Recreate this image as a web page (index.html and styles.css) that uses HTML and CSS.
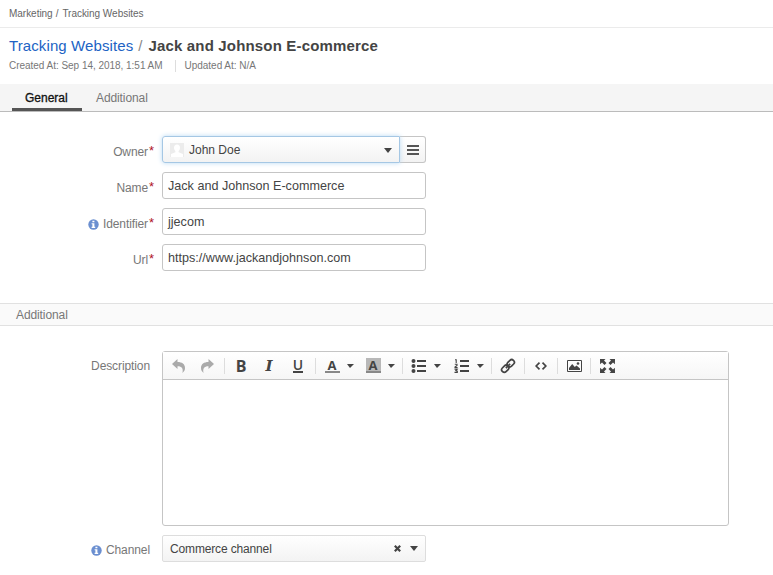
FILE: index.html
```html
<!DOCTYPE html>
<html lang="en">
<head>
<meta charset="utf-8">
<title>Jack and Johnson E-commerce</title>
<link rel="stylesheet" href="styles.css">
</head>
<body>
<nav class="breadcrumb"><span>Marketing</span><span class="crumb-sep">/</span><span>Tracking Websites</span></nav>
<header class="page-head">
  <h1 class="title"><a class="title-link">Tracking Websites</a><span class="title-sep">/</span><b class="title-name">Jack and Johnson E-commerce</b></h1>
  <div class="meta"><span class="created">Created At: Sep 14, 2018, 1:51 AM</span><span class="updated">Updated At: N/A</span></div>
</header>
<div class="tabs"><a class="tab active"><span>General</span></a><a class="tab"><span>Additional</span></a></div>
<main>
  <section class="fields">
    <div class="row">
      <label class="label"><span>Owner</span><em>*</em></label>
      <div class="owner">
        <div class="select focused">
          <svg class="avatar" width="14" height="14" viewBox="0 0 14 14"><path fill="#ececec" d="M0 0h14v14H0z"/><path fill="#fff" d="M7 1.500c2 0 3 1.300 3 3.200 0 1.500-.7 2.800-1.400 3.400v1.200L13 11v3H1v-3l4.400-1.700V8.100C4.700 7.500 4 6.200 4 4.700 4 2.800 5 1.500 7 1.500z"/></svg>
          <span class="owner-name">John Doe</span>
          <i class="arrow"></i>
        </div>
        <button class="list-btn"><svg width="12" height="10" viewBox="0 0 12 10"><path fill="#555" d="M0 0h12v2H0zM0 4h12v2H0zM0 8h12v2H0z"/></svg></button>
      </div>
    </div>
    <div class="row"><label class="label"><span>Name</span><em>*</em></label><div class="input"><span>Jack and Johnson E-commerce</span></div></div>
    <div class="row"><label class="label"><svg class="info" width="11" height="11" viewBox="0 0 11 11"><circle cx="5.500" cy="5.500" r="5.200" fill="#6b8fd0"/><path fill="#fff" d="M4.400 1.700h2v1.500h-2zM3.600 4.200h2.800v3.600h.8v1.100H3.600V7.800h.8V5.300h-.8z"/></svg><span>Identifier</span><em>*</em></label><div class="input"><span>jjecom</span></div></div>
    <div class="row"><label class="label"><span>Url</span><em>*</em></label><div class="input"><span>https://www.jackandjohnson.com</span></div></div>
  </section>
  <h2 class="section-title">Additional</h2>
  <section class="extra">
    <div class="row editor-row">
      <label class="label plain"><span>Description</span></label>
      <div class="editor">
        <div class="toolbar">
          <span class="btn"><svg width="14" height="14" viewBox="0 0 14 14"><path fill="#aaa" d="M0 5 5.500 0v3C10 3 13 5 13 9c0 2-.8 3.500-2.600 5C11.500 10 10 7.300 5.500 7.300V10z"/></svg></span>
          <span class="btn"><svg width="14" height="14" viewBox="0 0 14 14"><path fill="#aaa" d="M14 5 8.500 0v3C4 3 1 5 1 9c0 2 .8 3.500 2.600 5C2.500 10 4 7.300 8.500 7.300V10z"/></svg></span>
          <i class="sep"></i>
          <span class="btn bold">B</span><span class="btn italic">I</span><span class="btn underline"><span>U</span></span>
          <i class="sep"></i>
          <span class="btn"><b class="color">A</b></span><span class="drop"><i class="small-arrow"></i></span>
          <span class="btn"><b class="color back">A</b></span><span class="drop"><i class="small-arrow"></i></span>
          <i class="sep"></i>
          <span class="btn"><svg width="16" height="14" viewBox="0 0 16 14"><path fill="#444" d="M6 1h9v2H6zM6 6h9v2H6zM6 11h9v2H6z"/><g fill="#444"><circle cx="2.500" cy="2" r="2"/><circle cx="2.500" cy="7" r="2"/><circle cx="2.500" cy="12" r="2"/></g></svg></span><span class="drop"><i class="small-arrow"></i></span>
          <span class="btn ordered"><svg width="16" height="14" viewBox="0 0 16 14"><path fill="#444" d="M6 1h9v2H6zM6 6h9v2H6zM6 11h9v2H6z"/><path fill="none" stroke="#444" stroke-width="1.100" d="M1 .8h1.200v3.300M.8 5.300H3v1.200L1 8.100v.5h2.600M.5 10.300h2.600l-1.300 1.300 1.500.6v1.200H.5"/></svg></span><span class="drop"><i class="small-arrow"></i></span>
          <i class="sep"></i>
          <span class="btn"><svg width="16" height="16" viewBox="0 0 16 16"><g fill="none" stroke="#444" stroke-width="1.700" transform="rotate(-45 8 8)"><rect x=".2" y="5.400" width="7.800" height="5.200" rx="2.400"/><rect x="8" y="5.400" width="7.800" height="5.200" rx="2.400"/><path d="M5 8h6"/></g></svg></span>
          <i class="sep"></i>
          <span class="btn"><svg width="12" height="8" viewBox="0 0 12 8"><path fill="none" stroke="#444" stroke-width="1.700" d="M4.500.7 1.200 4l3.300 3.300M7.500.7 10.800 4 7.500 7.300"/></svg></span>
          <i class="sep"></i>
          <span class="btn"><svg width="15" height="12" viewBox="0 0 15 12"><path fill="none" stroke="#444" d="M.5.5h14v11H.5z"/><path fill="#444" d="M2 10V8l3.200-4 2.600 3 1.700-1.500L13 8.500V10z"/><circle cx="11" cy="3.500" r="1.300" fill="#444"/></svg></span>
          <i class="sep"></i>
          <span class="btn"><svg width="15" height="14" viewBox="0 0 15 14"><path fill="#444" d="M0 0h5.500L4 1.500 6.500 4 4.500 6 2 3.500.1 5.300zM15 0H9.500L11 1.500 8.500 4l2 2L13 3.500l1.900 1.800zM0 14h5.500L4 12.500 6.500 10l-2-2L2 10.500.1 8.700zM15 14H9.500l1.500-1.500L8.500 10l2-2 2.500 2.500 1.900-1.800z"/></svg></span>
        </div>
        <div class="canvas"></div>
      </div>
    </div>
    <div class="row">
      <label class="label plain"><svg class="info" width="11" height="11" viewBox="0 0 11 11"><circle cx="5.500" cy="5.500" r="5.200" fill="#6b8fd0"/><path fill="#fff" d="M4.400 1.700h2v1.500h-2zM3.600 4.200h2.800v3.600h.8v1.100H3.600V7.800h.8V5.300h-.8z"/></svg><span>Channel</span></label>
      <div class="select channel"><span class="channel-name">Commerce channel</span><svg class="clear" width="7" height="7" viewBox="0 0 7 7"><path stroke="#444" stroke-width="2.200" d="m.8.8 5.400 5.400M6.200.8.8 6.200"/></svg><i class="arrow"></i></div>
    </div>
  </section>
</main>
</body>
</html>
```
FILE: styles.css
```css
* { box-sizing: border-box; }
body { margin: 0; background: #fff; color: #444; font: 12px/16px "Liberation Sans", Arial, sans-serif; overflow: hidden; }
.breadcrumb { height: 28px; padding-left: 9px; display: flex; align-items: center; border-bottom: 1px solid #ebebeb; font-size: 10px; letter-spacing: -.03px; color: #666; }
.crumb-sep { margin: 0 4px 0 3px; }
.page-head { height: 56px; padding: 8px 0 0 9px; }
.title { margin: 0; display: flex; font-size: 15px; line-height: 20px; font-weight: normal; }
.title-link { color: #2163c4; letter-spacing: .1px; }
.title-sep { color: #888; margin: 0 6px 0 5px; }
.title-name { color: #444; letter-spacing: .17px; }
.meta { display: flex; margin-top: 4px; font-size: 10px; line-height: 12px; letter-spacing: -.03px; color: #777; }
.updated { margin-left: 12px; padding-left: 9px; border-left: 1px solid #ddd; }
.tabs { display: flex; height: 28px; padding-left: 12px; background: #f5f5f5; border-bottom: 1px solid #bbb; }
.tab { padding: 6px 14px 0; color: #777; letter-spacing: -.1px; }
.tab.active { padding: 6px 13px 0; color: #111; width: 70px; border-bottom: 3px solid #555; letter-spacing: 0; -webkit-text-stroke: .3px #111; }
.fields { padding-top: 24px; height: 191px; display: flex; flex-direction: column; gap: 9px; }
.row { display: flex; height: 27px; }
.label { width: 162px; padding: 8px 8px 0 0; display: flex; justify-content: flex-end; letter-spacing: -.1px; color: #777; }
.label.plain { padding: 7px 12px 0 0; }
.label em { color: #b01525; font-style: normal; font-size: 13px; line-height: 14px; margin-left: 1px; width: 5px; }
.info { margin: 3px 4px 0 0; }
.input { width: 264px; border: 1px solid #c5c5c5; border-radius: 3px; padding: 5px; font-size: 12.600px; line-height: 16px; }
.owner { display: flex; width: 264px; }
.select { position: relative; display: flex; align-items: center; border: 1px solid #ddd; border-radius: 2px; background: linear-gradient(#fff, #f3f3f3); }
.select.focused { width: 238px; border-color: #a5c7e4; box-shadow: 0 0 5px #b9d9f2; border-radius: 3px 0 0 3px; padding: 0 7px; z-index: 1; }
.avatar { margin-right: 5px; }
.arrow { border: 4px solid transparent; border-top: 5px solid #444; border-bottom: 0; margin-left: auto; }
.focused .arrow { margin-top: 1px; }
.list-btn { width: 26px; padding: 0; display: flex; align-items: center; justify-content: center; border: 1px solid #c5c5c5; border-left: 0; border-radius: 0 3px 3px 0; background: linear-gradient(#fff, #f3f3f3); }
.section-title { margin: 0; height: 23px; padding: 3px 16px; border: solid #e1e1e1; border-width: 1px 0; background: #fafafa; color: #777; font-size: 12px; line-height: 16px; letter-spacing: -.1px; font-weight: normal; }
.extra { padding-top: 25px; display: flex; flex-direction: column; gap: 9px; }
.editor-row { height: 175px; }
.editor { width: 567px; border: 1px solid #c5c5c5; border-radius: 3px; }
.toolbar { height: 28px; display: flex; align-items: center; padding-left: 2px; border-bottom: 1px solid #c5c5c5; background: linear-gradient(#fff, #f6f6f6); }
.btn { width: 28px; height: 18px; display: flex; align-items: center; justify-content: center; flex: none; }
.sep { width: 1px; height: 16px; margin: 0 2px; flex: none; background: #ddd; }
.sep:nth-of-type(-n+2) { margin-left: 3px; }
.bold { font: bold 16px "Open Sans", sans-serif; }
.italic { font: italic bold 15px "DejaVu Serif", serif; }
.underline { margin-left: 1px; font: 600 14px/12px "Open Sans", sans-serif; }
.underline span { height: 14px; border-bottom: 2px solid #444; }
.color { width: 15px; height: 15px; border-bottom: 2px solid #888; font: bold 13px/14px "Open Sans", sans-serif; text-align: center; }
.color.back { background: #b8b8b8; }
.drop { width: 13px; padding-left: 1px; flex: none; }
.small-arrow { display: block; width: 0; border: solid transparent; border-width: 4px 4px 0 3px; border-top-color: #444; }
.ordered { margin-left: 2px; }
.channel { width: 264px; padding: 0 7px; letter-spacing: -.15px; }
.clear { margin-left: auto; }
.clear + .arrow { margin-left: 9px; }
```
